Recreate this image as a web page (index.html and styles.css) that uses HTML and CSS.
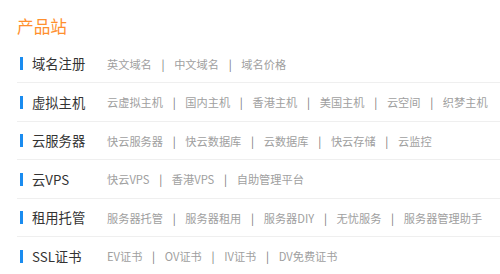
FILE: index.html
```html
<!DOCTYPE html>
<html lang="zh-CN">
<head>
  <meta charset="UTF-8" />
  <title>产品站</title>
  <link rel="stylesheet" href="styles.css">
</head>
<body>
  <div class="panel">
    <h2 class="title">产品站</h2>

    <ul class="products">
      <li class="row">
        <span class="label">域名注册</span>
        <div class="links">
          <a href="#">英文域名</a><i>|</i>
          <a href="#">中文域名</a><i>|</i>
          <a href="#">域名价格</a>
        </div>
      </li>
      <li class="row">
        <span class="label">虚拟主机</span>
        <div class="links">
          <a href="#">云虚拟主机</a><i>|</i>
          <a href="#">国内主机</a><i>|</i>
          <a href="#">香港主机</a><i>|</i>
          <a href="#">美国主机</a><i>|</i>
          <a href="#">云空间</a><i>|</i>
          <a href="#">织梦主机</a>
        </div>
      </li>
      <li class="row">
        <span class="label">云服务器</span>
        <div class="links">
          <a href="#">快云服务器</a><i>|</i>
          <a href="#">快云数据库</a><i>|</i>
          <a href="#">云数据库</a><i>|</i>
          <a href="#">快云存储</a><i>|</i>
          <a href="#">云监控</a>
        </div>
      </li>
      <li class="row">
        <span class="label">云VPS</span>
        <div class="links">
          <a href="#">快云VPS</a><i>|</i>
          <a href="#">香港VPS</a><i>|</i>
          <a href="#">自助管理平台</a>
        </div>
      </li>
      <li class="row">
        <span class="label">租用托管</span>
        <div class="links">
          <a href="#">服务器托管</a><i>|</i>
          <a href="#">服务器租用</a><i>|</i>
          <a href="#">服务器DIY</a><i>|</i>
          <a href="#">无忧服务</a><i>|</i>
          <a href="#">服务器管理助手</a>
        </div>
      </li>
      <li class="row">
        <span class="label">SSL证书</span>
        <div class="links">
          <a href="#">EV证书</a><i>|</i>
          <a href="#">OV证书</a><i>|</i>
          <a href="#">IV证书</a><i>|</i>
          <a href="#">DV免费证书</a>
        </div>
      </li>
    </ul>
  </div>
</body>
</html>
```

FILE: styles.css
```css
body {
  margin: 0;
  background: #fff;
  font-family: "Noto Sans CJK SC", "Noto Sans", sans-serif;
}

.panel {
  padding-left: 17px;
}

.title {
  margin: 16px 0 7.75px;
  font-size: 16.7px;
  line-height: 21px;
  font-weight: normal;
  color: #ff8f2e;
}

.products {
  list-style: none;
  margin: 0;
  padding: 0;
}

.row {
  display: flex;
  align-items: center;
  height: 37.5px;
  border-bottom: 1px solid #efefef;
}

.row:last-child {
  border-bottom: none;
}

.label {
  display: flex;
  align-items: center;
  width: 90px;
  font-size: 13.3px;
  color: #333;
}

.label::before {
  content: "";
  width: 2.5px;
  height: 13px;
  margin: 0 9.5px 0 3px;
  background: #1a8cf0;
}

.links {
  display: flex;
  align-items: center;
  font-size: 11.2px;
  white-space: nowrap;
}

.links a {
  color: #a0a0a0;
  text-decoration: none;
}

.links i {
  font-style: normal;
  color: #777;
  margin: 0 9.7px;
}
```
